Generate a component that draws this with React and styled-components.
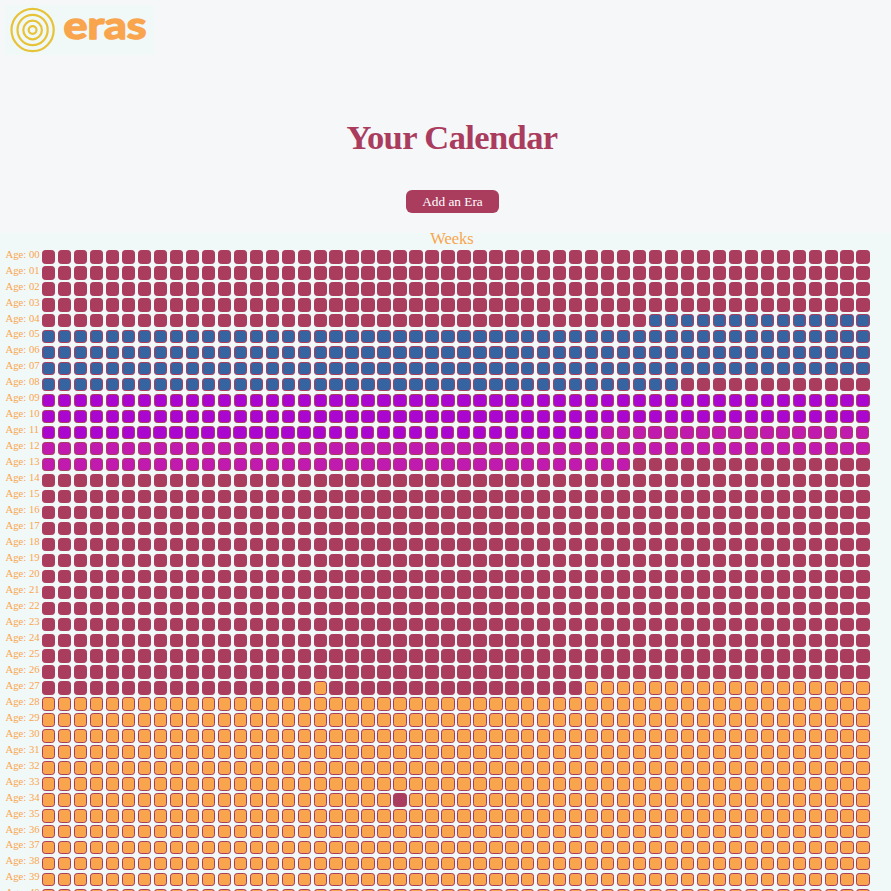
import React from "react";
import styled, { createGlobalStyle } from "styled-components";

const GlobalStyle = createGlobalStyle`
  html, body { margin: 0; background: #f1f8f8; }
  html { overflow: hidden; }
  body { height: 891px; overflow: hidden; font-family: "Liberation Serif", "Times New Roman", serif; }
`;

const COLORS = {
  past: "#aa3c5e",
  school: "#3564a0",
  violet: "#ab06d0",
  magenta: "#c01aae",
  future: "#f9a54e",
};

const Page = styled.div`
  height: 891px;
  overflow: hidden;
  background: #f1f8f8;
`;

const Header = styled.header`
  height: 233px;
  display: flex;
  flex-direction: column;
  background: #f5f7f9;
`;

const Brand = styled.div`
  width: 149px;
  height: 50px;
  margin: 5px 0 0 5px;
  display: flex;
  align-items: center;
  background: #f1f8f8;
`;

const Rings = styled.svg`
  flex: none;
  width: 46px;
  height: 46px;
  margin-left: 5px;
`;

const BrandName = styled.svg`
  flex: none;
  width: 92px;
  height: 50px;
  overflow: visible;

  text {
    font-family: "Lato", sans-serif;
    font-weight: 700;
    font-size: 38px;
    fill: #f9a54e;
    stroke: #f9a54e;
    stroke-width: 1.6px;
    stroke-linejoin: round;
  }
`;

const Title = styled.h1`
  margin: 61px 0 0;
  padding-left: 13px;
  text-align: center;
  font-size: 34.5px;
  line-height: 42px;
  letter-spacing: -0.6px;
  font-weight: 700;
  color: #aa3c5e;
`;

const AddButton = styled.button`
  align-self: center;
  width: 93px;
  height: 23px;
  margin: 32px 0 0 14px;
  padding: 0;
  border: 0;
  border-radius: 6px;
  background: #aa3c5e;
  color: #fff;
  font-family: inherit;
  font-size: 13.3px;
  line-height: 23px;
`;

const WeeksLabel = styled.div`
  height: 17.25px;
  padding-left: 13px;
  text-align: center;
  font-size: 16.5px;
  line-height: 12px;
  color: #f9a54e;
`;

const Calendar = styled.div`
  display: flex;
  flex-direction: column;
`;

const YearRow = styled.div`
  display: flex;
  flex: none;
  height: 15.96875px;
  padding-left: 5.5px;
`;

const Age = styled.span`
  flex: none;
  width: ${(p) => (p.$narrow ? 36.17 : 36.546875)}px;
  font-size: 10.67px;
  line-height: 12px;
  height: 12px;
  margin-top: -2.63px;
  white-space: pre;
  color: #f9a54e;
`;

const Weeks = styled.div`
  display: flex;
  gap: 2.609375px;
`;

const Week = styled.span`
  flex: none;
  box-sizing: border-box;
  width: 13.359375px;
  height: 13.359375px;
  border: 1px solid #aa3c5e;
  border-radius: 3.2px;
  background: ${(p) => COLORS[p.$era]};
`;

function eraFor(year, week) {
  const n = year * 52 + week;
  if (year === 27 && week === 17) return "future";
  if (year === 34 && week === 22) return "past";
  if (n >= 27 * 52 + 34) return "future";
  if (n >= 4 * 52 + 38 && n < 8 * 52 + 40) return "school";
  if (n >= 9 * 52 && n < 11 * 52 + 35) return "violet";
  if (n >= 11 * 52 + 35 && n < 13 * 52 + 37) return "magenta";
  return "past";
}

const years = Array.from({ length: 41 }, (_, i) => i);
const weeks = Array.from({ length: 52 }, (_, i) => i);

export default function App() {
  return (
    <Page>
      <GlobalStyle />
      <Header>
        <Brand>
          <Rings viewBox="0 0 46 46" fill="none" stroke="#e6c338" strokeWidth="2.2">
            {[21.1, 15.1, 9.3, 3.9].map((r) => (
              <circle key={r} cx="22.6" cy="23" r={r} />
            ))}
          </Rings>
          <BrandName>
            <text x="7.5" y="34.2" textLength="83" lengthAdjust="spacingAndGlyphs">eras</text>
          </BrandName>
        </Brand>
        <Title>Your Calendar</Title>
        <AddButton>Add an Era</AddButton>
      </Header>
      <WeeksLabel>Weeks</WeeksLabel>
      <Calendar>
        {years.map((y) => (
          <YearRow key={y}>
            <Age $narrow={y === 11}>{`Age: ${String(y).padStart(2, "0")}`}</Age>
            <Weeks>
              {weeks.map((w) => (
                <Week key={w} $era={eraFor(y, w)} />
              ))}
            </Weeks>
          </YearRow>
        ))}
      </Calendar>
    </Page>
  );
}
